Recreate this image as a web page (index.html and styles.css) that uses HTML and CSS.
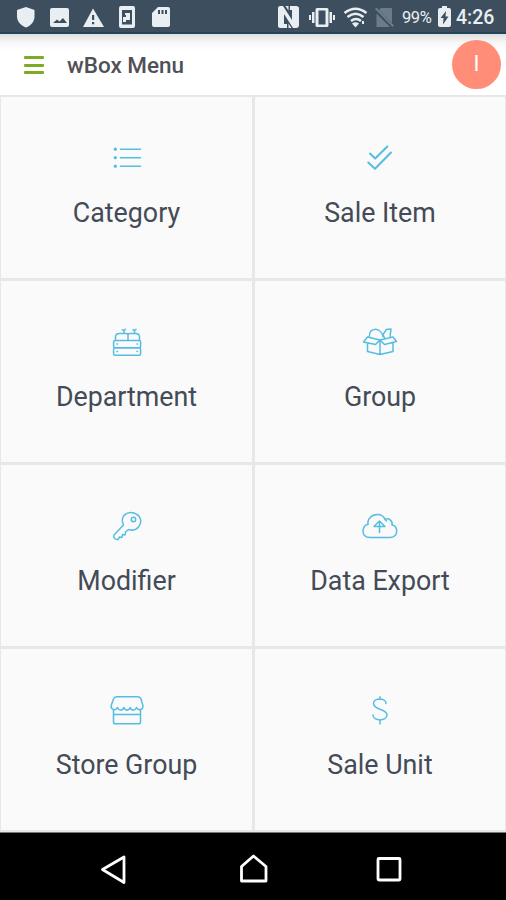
FILE: index.html
```
<!DOCTYPE html>
<html lang="en">
<head>
<meta charset="utf-8">
<title>wBox Menu</title>
<link rel="stylesheet" href="styles.css">
</head>
<body>
<div class="screen">
  <div class="status">
    <svg class="status-left" width="180" height="34" viewBox="0 0 180 34">
      <path d="M26 7l8.500 3v6.500c0 5-3.500 9-8.500 11-5-2-9-6-9-11V10z"/>
      <path fill-rule="evenodd" d="M52 8h15q2 0 2 2v15q0 2-2 2H52q-2 0-2-2V10q0-2 2-2zM53 23h14l-4-5-3.500 3.500-2.500-2z"/>
      <path fill-rule="evenodd" d="M93 8.500L104 27H83zM92 15v5h2.200v-5zM92 22v2.200h2.200V22z"/>
      <path fill-rule="evenodd" d="M121 6h12q2 0 2 2v18q0 2-2 2h-12q-2 0-2-2V8q0-2 2-2zM122 10v14.500h10V10z"/>
      <path d="M125 13h5v7h-4v2h-3v-5h3v-2h-1z"/>
      <path fill-rule="evenodd" d="M158 7h10q2 0 2 2v16q0 2-2 2h-14q-2 0-2-2V13zM158 10v4h2v-4zM161.500 10v4h2v-4zM165 10v4h2v-4z"/>
    </svg>
    <div class="status-right">
      <svg width="120" height="34" viewBox="0 0 120 34">
        <path d="M2 8c0-1 1-2 2-2h3l9 14V10h-2V6h6c2 0 3 1 3 2v17c0 2-1 3-3 3h-3L8 14v10h3v4H4c-1 0-2-1-2-2z"/>
        <path d="M9.500 6H12.500v4.500zM15.500 28h-3v-4.500z"/>
        <path fill-rule="evenodd" d="M41 8h10q1.500 0 1.500 1.500v16q0 1.500-1.500 1.500H41q-1.500 0-1.500-1.500v-16Q39.500 8 41 8zM42.500 10.500v14h7v-14z"/>
        <path d="M36 12h2.500v11H36zM33 15h2v5h-2zM53.500 12H56v11h-2.500zM57 15h2v5h-2z"/>
        <g class="wifi"><path d="M68.500 13q11-8.500 22 0M71.500 17q8-6.500 16 0M75 21q5-4 10 0"/></g>
        <path d="M76 23.500q3.500-2.500 7 0L79.500 27.500zM86 21h2v3h-2z"/>
        <g opacity=".28"><path d="M105 8h11v15L103 10zM100.500 13.500L114 27h-13.500z"/><path d="M99 9l1.500-1.500L118 25.500l-1.500 1.500z"/></g>
      </svg>
      <span class="percent">99%</span>
      <svg class="battery" width="13" height="34" viewBox="0 0 13 34"><path fill-rule="evenodd" d="M4 6h5v2h2q2 0 2 2v15q0 2-2 2H2q-2 0-2-2V10q0-2 2-2h2zM8 11l-5.500 7h3L5 24.500l5.500-8h-3z"/></svg>
      <span class="time">4:26</span>
    </div>
  </div>
  <header class="header">
    <div class="burger"><i></i><i></i><i></i></div>
    <h1>wBox Menu</h1>
    <div class="avatar">I</div>
  </header>
  <main class="grid">
    <div class="cell"><svg class="icon" viewBox="0 0 40 40"><path d="M13.500 12.200h20M13.500 20.700h20M13.500 29.200h20"/><g class="dots"><circle cx="8.300" cy="12.200" r="1.600"/><circle cx="8.300" cy="20.700" r="1.600"/><circle cx="8.300" cy="29.200" r="1.600"/></g></svg><span>Category</span></div>
    <div class="cell"><svg class="icon bold" viewBox="0 0 40 40"><path d="M10 16.500l5.200 5L27.300 9.500M8.300 25.500l6.700 6.200L31 15.500"/></svg><span>Sale Item</span></div>
    <div class="cell"><svg class="icon" viewBox="0 0 40 40"><rect x="6.600" y="19.500" width="27" height="7.200" rx="1.500"/><rect x="6.600" y="26.700" width="27" height="7.500" rx="1.500"/><path d="M8.500 19v-3q0-3.500 4-3.500h7q1.500 0 1.500 1.500v5M21 19v-5q0-1.500 1.500-1.500h6q4 0 4 3.500v3M17 12V9.500l-1.500-.7M17 9.500l1.500-1.300M27.500 12V9.500l-1.500-.7M27.500 9.500l1.500-1.300M10 23h.5M30 23h.5M10 30.500h.5M30 30.500h.5"/></svg><span>Department</span></div>
    <div class="cell"><svg class="icon" viewBox="0 0 40 40"><path d="M7.500 22v8.500l12.500 3 13-3V22M20 19v14.500M7.500 16L20 19l-4.500 4.500L3.500 21zM20 19l13-3 3.500 4.500-12 3zM9.500 15.500c-1-9 11-10 13.500 0M24.500 17l-1.500-3.500 3.500-5 4.500-.5-1 8"/></svg><span>Group</span></div>
    <div class="cell"><svg class="icon" viewBox="0 0 40 40"><path d="M16.500 20C12.500 11 20 6 27 8c7 2.500 8.500 9 4.500 14-3 3.500-7 3.500-10 2.500L18.500 27l-.5 3-2.500-.5-.5 3-2.500-.5-1.500 2.500c-3 .5-5-2-4-4.500z"/><circle cx="26.500" cy="14.500" r="2.200"/></svg><span>Modifier</span></div>
    <div class="cell"><svg class="icon" viewBox="0 0 40 40"><path d="M10 32.500C5 32.500 3 29.500 3 26c0-4 2.500-6.500 5-6.500C7 14 12 9.500 17 9.500c4 0 7 2 8 5 3.500-2 8 1 7 5.500 3 .5 4.700 3 4.700 6 0 4-2.700 6.500-7.200 6.500zM19.500 27.500V16.500M14 21.500l5.500-5.500 5.500 5.500zM25 14.500l1.500 1.500"/></svg><span>Data Export</span></div>
    <div class="cell"><svg class="icon" viewBox="0 0 40 40"><path d="M9.500 7.800h21.500q2 0 3 2.200l2 7c0 4-5 5-6.500 1.500-1.500 3.500-5 3.500-6.300 0-1.400 3.500-5 3.500-6.400 0-1.300 3.500-4.800 3.500-6.300 0C9 22 4 21 4 17l2.500-7q1-2.200 3-2.200zM6.500 20.500V33q0 1.800 1.800 1.800h23.400q1.800 0 1.800-1.800V20.500M6.500 25.500h27"/></svg><span>Store Group</span></div>
    <div class="cell"><svg class="icon" viewBox="0 0 40 40"><path d="M26 14.500c0-6-12.500-6-12.500 0 0 7 13.500 5 13.500 11.500s-14 6.500-14 0M20 7.700V10.500M20 31v4"/></svg><span>Sale Unit</span></div>
  </main>
  <nav class="nav">
    <svg width="506" height="68" viewBox="0 0 506 68"><path d="M124 25v25.500L102.500 37.500zM241.500 49V34.500L253.500 24l12.500 10.500V49z"/><rect x="378" y="26.500" width="22" height="21.500" rx="1"/></svg>
  </nav>
</div>
</body>
</html>
```
FILE: styles.css
```
* { box-sizing: border-box; }
body { margin: 0; font-family: Roboto, "Liberation Sans", sans-serif; }
.screen { width: 506px; height: 900px; display: flex; flex-direction: column; overflow: hidden; background: #fff; }
.status { height: 34px; flex: none; display: flex; justify-content: space-between; background: #3d4f5f; border-bottom: 2px solid #244459; color: #e9eef2; }
.status svg { fill: #e9eef2; flex: none; }
.status-right { display: flex; height: 34px; line-height: 36px; width: 230px; }
.status .wifi { fill: none; stroke: #e9eef2; stroke-width: 2.6; }
.percent { font-size: 16.5px; width: 31px; margin-left: 6px; letter-spacing: -0.4px; }
.battery { margin-left: 5px; }
.time { font-size: 19.5px; font-weight: 500; margin-left: 5px; }
.header { height: 61px; flex: none; display: flex; align-items: center; padding: 0 5px 0 24px; background: linear-gradient(#e0e0e0, #f6f6f6 8px, #fff 16px); }
.burger { width: 20px; height: 18px; display: flex; flex-direction: column; justify-content: space-between; margin-top: 1px; }
.burger i { height: 3px; background: #7cac26; border-radius: 1px; }
h1 { margin: 1px 0 0 23px; font-size: 22.5px; font-weight: 500; color: #505156; flex: 1; }
.avatar { width: 49px; height: 49px; border-radius: 50%; background: #ff8d78; color: #fff; font-size: 22px; line-height: 48px; text-align: center; }
.grid { height: 737px; flex: none; display: grid; grid-template-columns: 251px 250px; grid-template-rows: repeat(4, 181px); gap: 3px; padding: 2px 1px; background: #e7e7e7; }
.cell { background: #fafafa; display: flex; flex-direction: column; align-items: center; padding-top: 40px; font-size: 26.8px; line-height: 32px; color: #444b57; }
.cell span { margin-top: 20px; white-space: nowrap; }
.icon { width: 40px; height: 40px; flex: none; fill: none; stroke: #55bde2; stroke-width: 1.5; stroke-linecap: round; stroke-linejoin: round; }
.bold { stroke-width: 2; }
.dots { fill: #55bde2; stroke: none; }
.nav { height: 68px; flex: none; background: #000; border-top: 1px solid #777; }
.nav svg { display: block; margin-top: -1px; fill: none; stroke: #fff; stroke-width: 2.8; stroke-linejoin: round; }
```
